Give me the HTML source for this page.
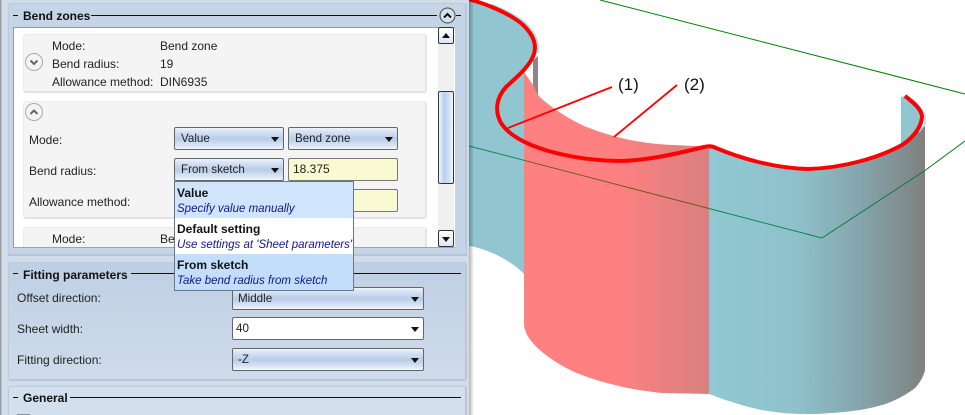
<!DOCTYPE html>
<html><head><meta charset="utf-8">
<style>
html,body{margin:0;padding:0;background:#fff}
#r{position:relative;width:965px;height:415px;overflow:hidden;background:#fff;font:12px "Liberation Sans",sans-serif;color:#222}
#r div,#r span{position:absolute;white-space:nowrap}
.t{line-height:14px}
.b{font-weight:bold;color:#111}
.combo{box-sizing:border-box;height:23px;border:1px solid #666;border-radius:2px;background:linear-gradient(#eef4fb 0,#d3e1f3 20%,#b9cde8 52%,#d5e3f4 80%,#f1f6fc 100%);line-height:21px;padding-left:6px;color:#222;font-size:11.6px}
.combo.w{background:#fff}
.combo i{position:absolute;right:4px;top:9px;width:0;height:0;border:4px solid transparent;border-top:5px solid #111;border-bottom:0}
.inp{box-sizing:border-box;height:23px;border:1px solid #777;border-radius:2px;background:#f9f9d2;line-height:21px;padding-left:4px}
.card{left:23px;width:404px;box-sizing:border-box;background:#f4f4f4;border:1px solid #ececec;border-bottom:2px solid #e2e2e2;border-right:2px solid #e6e6e6;border-radius:3px}
.it{left:0;width:178px;height:36px}
.it b{position:absolute;left:2px;top:4px;font-size:12px;color:#111;line-height:14px}
.it em{position:absolute;left:2px;top:20px;font-size:11.5px;color:#14148c;line-height:14px}
.grp{left:8px;width:459px;box-sizing:border-box;border-radius:3px;border:1px solid #bdcad9}
.ln{height:1px;background:#111}
.sb{left:438px;width:16px;box-sizing:border-box;border:1px solid #333;border-radius:2px}
</style></head><body><div id="r">
<svg style="position:absolute;left:0;top:0" width="965" height="415" viewBox="0 0 965 415">
<defs>
<linearGradient id="gr" gradientUnits="userSpaceOnUse" x1="524" x2="709" y1="0" y2="0"><stop offset="0" stop-color="#ff8080"/><stop offset=".5" stop-color="#ff8080"/><stop offset="1" stop-color="#d98080"/></linearGradient>
<linearGradient id="gt" gradientUnits="userSpaceOnUse" x1="709" x2="925" y1="0" y2="0"><stop offset="0" stop-color="#91c8d2"/><stop offset=".4" stop-color="#8fc1cb"/><stop offset=".7" stop-color="#84a6ad"/><stop offset="1" stop-color="#808080"/></linearGradient>
<linearGradient id="sh" gradientUnits="userSpaceOnUse" x1="468" x2="474" y1="0" y2="0"><stop offset="0" stop-color="#000" stop-opacity=".35"/><stop offset="1" stop-color="#000" stop-opacity="0"/></linearGradient>
</defs>
<path d="M600 0L965 94" stroke="#008000" fill="none"/>
<!-- left teal -->
<path d="M468 0L498 9L522 22L533 38L536 50L528 63L524 68L524 274C515 264 498 255 490 252C480 248 475 247 469 246L468 246Z" fill="#91c6d0"/>
<!-- grey piece -->
<path d="M533 60L538 56L538 96L533 86Z" fill="#888"/>
<!-- red -->
<path d="M524 68L524 72L533 85L538 95C545 103 565 117 582 125C600 133 625 140 648 143C665 145 690 146 709 146L709 394L662 393C630 390 600 382 582 375C560 367 540 352 532 342C527 336 524 330 524 323Z" fill="url(#gr)"/>
<!-- right teal -->
<path d="M709 147L748 160L791 168L808 170L848 165L882 155L902 145L918 132L925 126L925 370C923 380 915 388 915 388C905 396 890 403 882 405C865 410 848 412 830 413C810 415 790 414 775 412C755 410 730 402 709 394Z" fill="url(#gt)"/>
<!-- right inner -->
<path d="M901 97L905 96L915 103L923 114L923 120L918 130L902 146L901 146Z" fill="#91c6d0"/>
<path d="M905 95L916 102L925 114L925 124L919 132" fill="none" stroke="#a4e0ea" stroke-width="1.500"/>
<path d="M490 5C505 11 516 17 524 24C534 33 538 44 536 54" fill="none" stroke="#a4e0ea" stroke-width="2" transform="translate(1.500,-.5)"/>
<!-- green lines -->
<path d="M469 146L524 160.300" stroke="#0f8a50" fill="none"/>
<path d="M524 160.300L709 208.500" stroke="#6b5a1a" fill="none"/>
<path d="M709 208.500L822 238" stroke="#0a8a50" fill="none"/>
<path d="M822 238L925 170.500" stroke="#0a7a3c" fill="none"/>
<path d="M925 170.500L965 141" stroke="#008000" fill="none"/>
<!-- thick red edge -->
<path d="M468 -1C490 5 510 14 522 24C533 34 537 44 534 54C530 66 518 76 506 87C497 97 494 110 501 123C510 137 530 146 552 152C575 158 600 161 622 161C650 160 680 153 704 147Q711 145 716 148C735 156 770 168 808 169C845 168 880 157 902 145C916 136 922 124 922 116C921 109 914 103 905 96" fill="none" stroke="#ff0000" stroke-width="4"/>
<!-- callouts -->
<path d="M612 87L508 128M677 85L614 137" stroke="#ff0000" stroke-width="1.800" fill="none"/>
<text x="618" y="90" font-family="Liberation Sans" font-size="17" fill="#111">(1)</text>
<text x="684" y="90" font-family="Liberation Sans" font-size="17" fill="#111">(2)</text>
<rect x="468" y="0" width="6" height="415" fill="url(#sh)"/>
</svg>

<!-- panel -->
<div style="left:0;top:0;width:469px;height:415px;background:#d0dcea;border-left:1px solid #999;box-sizing:border-box"></div>
<div style="left:1px;top:0;width:1px;height:415px;background:#b9c3d2"></div>

<div class="grp" style="top:3px;height:253px;background:#c5d4e7;border-bottom:2px solid #b6c3d3;border-right:2px solid #b9c7d7"></div>
<div class="grp" style="top:262px;height:119px;background:linear-gradient(#bfcfe4,#cfdbea);border-bottom:2px solid #b9c6d6;border-right:2px solid #b9c7d7"></div>
<div class="grp" style="top:386px;height:40px;background:#d3dfec;border-right:2px solid #b9c7d7"></div>

<!-- Bend zones header -->
<div class="ln" style="left:13px;top:15px;width:5px"></div>
<div class="t b" style="left:23px;top:9px">Bend zones</div>
<div class="ln" style="left:91px;top:15px;width:346px"></div>
<div class="ln" style="left:456px;top:15px;width:5px"></div>
<svg style="position:absolute;left:438px;top:6px" width="19" height="19"><circle cx="9.500" cy="9.500" r="7.500" fill="#d5e0ee" stroke="#444"/><path d="M6 11.500L9.500 8L13 11.500" fill="none" stroke="#111" stroke-width="2"/></svg>

<!-- white list -->
<div style="left:13px;top:27px;width:442px;height:221px;background:#fff;border:1px solid #8f9aa8;border-right:0;box-sizing:border-box;border-bottom:1px solid #9aa5b3"></div>
<div class="card" style="top:34px;height:59px"></div>
<div class="t" style="left:52px;top:39px">Mode:</div>
<div class="t" style="left:160px;top:39px">Bend zone</div>
<div class="t" style="left:52px;top:57px">Bend radius:</div>
<div class="t" style="left:160px;top:57px">19</div>
<div class="t" style="left:52px;top:75px">Allowance method:</div>
<div class="t" style="left:160px;top:75px">DIN6935</div>
<svg style="position:absolute;left:24px;top:52px" width="20" height="20"><circle cx="10" cy="10" r="8.500" fill="#f4f4f4" stroke="#aaa"/><path d="M6.500 8.500L10 12L13.500 8.500" fill="none" stroke="#666" stroke-width="2"/></svg>

<div class="card" style="top:101px;height:118px"></div>
<svg style="position:absolute;left:24px;top:102px" width="20" height="20"><circle cx="10" cy="10" r="8.500" fill="#f4f4f4" stroke="#aaa"/><path d="M6.500 12L10 8.500L13.500 12" fill="none" stroke="#666" stroke-width="2"/></svg>
<div class="t" style="left:29px;top:133px">Mode:</div>
<div class="t" style="left:29px;top:164px">Bend radius:</div>
<div class="t" style="left:29px;top:195px">Allowance method:</div>
<div class="combo" style="left:174px;top:127px;width:110px">Value<i></i></div>
<div class="combo" style="left:288px;top:127px;width:110px">Bend zone<i></i></div>
<div class="combo" style="left:174px;top:158px;width:110px">From sketch<i></i></div>
<div class="inp" style="left:288px;top:158px;width:110px">18.375</div>
<div class="inp" style="left:288px;top:189px;width:110px"></div>

<div class="card" style="top:227px;height:30px;border-bottom:0;clip-path:inset(0 0 10px 0)"></div>
<div class="t" style="left:52px;top:232px">Mode:</div>
<div class="t" style="left:160px;top:232px">Bend zone</div>

<!-- scrollbar -->
<div style="left:438px;top:27px;width:16px;height:220px;background:#f0f0f0"></div>
<div class="sb" style="top:27px;height:17px;background:linear-gradient(#fff,#dbe6f4)"><span style="left:3px;top:5px;width:0;height:0;border:4px solid transparent;border-bottom:5px solid #111;border-top:0"></span></div>
<div class="sb" style="top:91px;height:93px;background:linear-gradient(90deg,#f2f6fb,#b9d0ec 35%,#cfdff2 70%,#f2f6fb)"></div>
<div class="sb" style="top:230px;height:17px;background:linear-gradient(#fff,#dbe6f4)"><span style="left:3px;top:6px;width:0;height:0;border:4px solid transparent;border-top:5px solid #111;border-bottom:0"></span></div>
<div style="left:13px;top:247px;width:442px;height:1px;background:#9aa5b3"></div>
<div style="left:13px;top:248px;width:453px;height:6px;background:#c5d4e7"></div>
<div style="left:8px;top:254px;width:459px;height:2px;background:#b6c3d3"></div>

<!-- Fitting -->
<div class="ln" style="left:13px;top:273px;width:5px"></div>
<div class="t b" style="left:23px;top:268px">Fitting parameters</div>
<div class="ln" style="left:131px;top:273px;width:330px"></div>
<div class="t" style="left:17px;top:291px">Offset direction:</div>
<div class="t" style="left:17px;top:322px">Sheet width:</div>
<div class="t" style="left:17px;top:353px">Fitting direction:</div>
<div class="combo" style="left:232px;top:287px;width:192px;padding-left:5px">Middle<i></i></div>
<div class="combo w" style="left:232px;top:317px;width:192px;padding-left:3px">40<i></i></div>
<div class="combo" style="left:232px;top:348px;width:192px;padding-left:5px">-Z<i></i></div>

<!-- General -->
<div class="ln" style="left:13px;top:397px;width:5px"></div>
<div class="t b" style="left:23px;top:391px">General</div>
<div class="ln" style="left:70px;top:397px;width:391px"></div>
<div style="left:17px;top:414px;width:13px;height:1px;background:#8a8f96"></div>

<!-- dropdown -->
<div style="left:174px;top:181px;width:180px;height:110px;box-sizing:border-box;border:1px solid #6a7686;background:#fff">
 <div class="it" style="top:0;background:#d0e5fc"><b>Value</b><em>Specify value manually</em></div>
 <div class="it" style="top:36px;background:#fff"><b>Default setting</b><em>Use settings at 'Sheet parameters'</em></div>
 <div class="it" style="top:72px;background:#c3defa"><b>From sketch</b><em>Take bend radius from sketch</em></div>
</div>
</div></body></html>
